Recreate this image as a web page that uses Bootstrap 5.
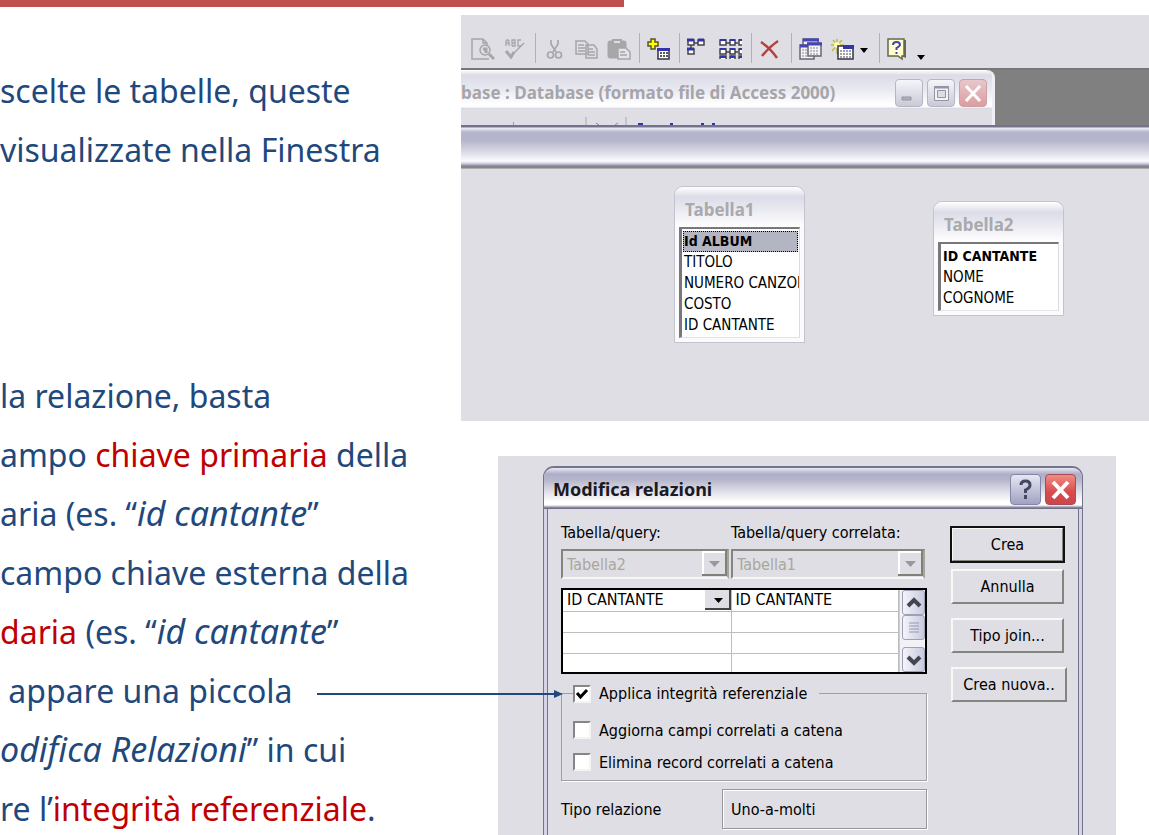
<!DOCTYPE html>
<html lang="it">
<head>
<meta charset="utf-8">
<meta name="viewport" content="width=device-width, initial-scale=1">
<title>Relazioni tra tabelle</title>
<link href="https://cdn.jsdelivr.net/npm/bootstrap@5.3.0/dist/css/bootstrap.min.css" rel="stylesheet">
<style>
:root { --face:#dfdee4; --navy:#1f497d; --brick:#c0504d; }
body { background:#fff; color:#000; font-family:"DejaVu Sans Condensed","DejaVu Sans",sans-serif; font-size:16px; line-height:21px; }
.slide { height:100vh; }
.accent { height:7px; width:54.3%; background:var(--brick); }
.halves { display:grid; grid-template-columns:minmax(0,461fr) minmax(0,688fr); }
.prose { font-family:"Noto Sans","Open Sans",sans-serif; font-size:32px; line-height:59px; color:var(--navy); padding-top:54px; }
.prose p { margin:0 0 187px; }
.prose p + p { margin:0; }
.prose p > span { display:block; white-space:pre; }
.prose em { font-size:34px; line-height:1; }
.prose .key { color:#c00000; }
.arrow-line { left:317px; top:686px; width:247px; height:16px; }
/* main application window */
.app-shot { margin-top:8px; background:var(--face); height:406px; }
.toolbar { height:55px; padding:18px 0 0 6px; border-bottom:2px solid #77777a; }
.toolbar button { width:32px; height:32px; padding:0 4px; border:0; background:none; line-height:0; }
.toolbar .slim { width:16px; padding:0; }
.toolbar .sep { width:8px; height:30px; background:linear-gradient(#b2b2b6,#b2b2b6) center/1px 100% no-repeat; }
.mdi { background:#808080; height:55px; }
.db-win { width:77.6%; background:var(--face); border-right:3px solid #eeeef6; border-radius:0 8px 0 0; }
.db-bar { height:39px; padding:6px 5px 0 0; border-radius:0 8px 0 0; background:linear-gradient(#fff,#dcdce8 5px,#e9e9f1 20px,#fff 34px,#fdfdff 37px,#ccccd8); }
.title-text { font-family:"Noto Sans","Open Sans",sans-serif; font-weight:700; font-size:17px; white-space:nowrap; }
.db-bar .title-text { color:#a5a5aa; }
.cap { width:28px; height:28px; padding:0; border:1px solid #b5b6c4; border-radius:4px; background:linear-gradient(#f5f5fa,#c9cad6); line-height:0; }
.cap.shut { background:linear-gradient(#e7c8cc,#dc9da1); border-color:#cf9fa6; }
.rel-bar { height:44px; background:linear-gradient(#73738c 0,#73738c 2px,#f0f0fa 3px,#b5b5cd 7px,#b4b4ca 15px,#d7d7e3 26px,#fbfbfd 36px,#dcdce9 38px,#a4a4b8 40px,#85858e 41px,#85858e 43px,#d6d6d4 44px); }
.canvas { height:252px; }
.node { width:131px; background:#fbfbfe; border:1px solid #c3c3ce; border-radius:9px 9px 0 0; padding:0 4px 4px; }
.node h2 { height:40px; margin:0 -4px; padding:11px 10px 0; color:#a9a9ae; line-height:24px; border-radius:9px 9px 0 0; background:linear-gradient(#fff,#dcdce8 10px,#ebebf2 24px,#fff); }
.fields { margin:0; padding:2px 1px 1px; list-style:none; background:#fff; border:solid #77777c; border-width:2px 1px 1px 3px; border-right-color:#dcdce0; border-bottom-color:#e2e2e8; overflow:hidden; white-space:nowrap; font-size:15px; }
.fields li { padding-left:1px; height:21px; }
.fields .fw-bold { font-size:14px; }
.fields .sel { background:#b4b5c2; outline:1px dotted #000; outline-offset:-1px; }
/* dialog */
.dlg-shot { margin:35px 33px 0 37px; padding:10px 33px 0 45px; background:var(--face); }
.dlg { border:solid #73738c; border-width:2px 1px 0; border-radius:11px 11px 0 0; padding:0 3px; background:#d4d4e6; }
.dlg-bar { height:41px; margin:0 -3px; padding:1px 6px 0 9px; border-radius:9px 9px 0 0; background:linear-gradient(#e8e8f4,#aeaec8 6px,#b7b7cc 12px,#e1e1ea 24px,#fff 34px,#fff 37px,#70708a 40px); }
.dlg-bar .title-text { font-size:18px; color:#1a1a22; }
.dlg-bar .cap { width:31px; height:31px; border-color:#8485a8; background:linear-gradient(#e6e7f2,#a0a2c1); }
.dlg-bar .cap.shut { border-color:#a94b55; background:linear-gradient(#ef8d82,#d94a4e 60%,#c9474b); }
.dlg-body { background:var(--face); border:solid #73738c; border-width:0 1px; padding:13px 11px 40px 13px; height:340px; gap:24px; }
.form-side { flex:0 1 366px; min-width:0; }
.two { display:grid; grid-template-columns:168fr 194fr; column-gap:2px; padding-right:2px; }
.two label { display:block; margin-bottom:6px; white-space:nowrap; }
.combo { appearance:none; width:100%; height:30px; padding:0 0 0 4px; border:2px solid #85857f; border-right-color:#a5a59f; border-bottom-color:#f6f6f2; border-radius:0; color:#a9a79c; opacity:1; background:var(--face) url("data:image/svg+xml,%3Csvg xmlns='http://www.w3.org/2000/svg' width='25' height='26'%3E%3Cpath fill='%23dfdee4' d='M0 0h25v26H0z'/%3E%3Cpath stroke='%23fff' stroke-width='2' fill='none' d='M1 25V1h24'/%3E%3Cpath stroke='%23808078' stroke-width='2' fill='none' d='M0 24h24V0'/%3E%3Cpath fill='%23999' d='M7 10h11l-5.500 6z'/%3E%3C/svg%3E") right top no-repeat; }
.joins { border:2px solid #000; background:#fff; height:86px; margin-top:9px; overflow:hidden; }
.joins table { width:100%; table-layout:fixed; border-collapse:collapse; }
.joins td { height:21px; padding:0 0 0 4px; line-height:20px; border-bottom:1px solid #bdbdbd; border-right:1px solid #bdbdbd; white-space:nowrap; }
.joins tr:last-child td { border-bottom:0; }
.joins td:first-child { width:168px; }
.joins select { appearance:none; display:block; width:100%; height:20px; border:0; border-radius:0; padding:0; color:#000; line-height:20px; background:#fff url("data:image/svg+xml,%3Csvg xmlns='http://www.w3.org/2000/svg' width='26' height='20'%3E%3Cpath fill='%23dfdee4' d='M0 0h26v20H0z'/%3E%3Cpath stroke='%23444' stroke-width='2' fill='none' d='M0 19h25V0'/%3E%3Cpath d='M9 8h9l-4.500 5z'/%3E%3C/svg%3E") right top no-repeat; }
.scroller { width:26px; flex:none; background:#f1f1f6; padding-left:2px; border-left:1px solid #ccc; }
.scroller button { width:100%; height:25px; padding:0; border:1px solid #9da0b7; border-radius:3px; background:linear-gradient(90deg,#f4f4fb,#c8c9dc); line-height:0; }
.rules { margin-top:9px; padding:0 0 2px 11px; border:1px solid #a0a0a3; box-shadow:1px 1px 0 #fff; }
.rules legend { float:none; width:auto; margin:0 0 10px; padding:0 12px 0 0; font-size:16px; line-height:21px; }
.rules label { display:flex; align-items:center; white-space:nowrap; }
.rules > label { height:32px; }
.rules .form-check-input { flex:none; width:18px; height:18px; margin:0 8px 0 0; border-radius:0; border:2px solid #85858a; border-right-color:#f4f4f0; border-bottom-color:#f4f4f0; background-color:#fff; }
.rules .form-check-input:checked { background-image:url("data:image/svg+xml,%3Csvg xmlns='http://www.w3.org/2000/svg' viewBox='0 0 14 14'%3E%3Cpath d='M2 6l3.500 4L12 3' fill='none' stroke='%23000' stroke-width='3'/%3E%3C/svg%3E"); background-size:14px; }
.kind { flex:0 0 205px; height:40px; border:1px solid #97979b; box-shadow:inset 1px 1px #fff,1px 1px #fff; padding:9px 8px; }
.cmds { flex:0 0 116px; gap:14px; padding-top:5px; }
.push { width:113px; height:35px; padding:0; border:2px solid; border-color:#f8f8f4 #85857f #85857f #f8f8f4; border-radius:0; background:var(--face); font-size:16px; line-height:21px; color:#000; }
.push.main { outline:2px solid #111; outline-offset:-1px; margin-bottom:-7px; }
.push.wide { width:116px; }
</style>
</head>
<body>
<div class="slide position-relative overflow-hidden">
  <div class="accent"></div>
  <main class="halves">
    <section class="prose">
      <p><span>scelte le tabelle, queste</span><span>visualizzate nella Finestra</span></p>
      <p><span>la relazione, basta</span><span>ampo <b class="key fw-normal">chiave primaria</b> della</span><span>aria (es. “<em>id cantante</em>”</span><span>campo chiave esterna della</span><span><b class="key fw-normal">daria</b> (es. “<em>id cantante</em>”</span><span> appare una piccola</span><span><em>odifica Relazioni</em>” in cui</span><span>re l’<b class="key fw-normal">integrità referenziale</b>.</span></p>
    </section>

    <div>
      <section class="app-shot overflow-hidden">
        <div class="toolbar d-flex" role="toolbar" aria-label="Relazioni">
          <button aria-label="Anteprima"><svg width="24" height="24" fill="none" stroke="#a7a7a9" stroke-width="1.500"><path d="M15 22H1V2h11l4 4v3M12 2v4h4M1 22h17"/><circle cx="14" cy="13" r="5"/><path d="M12 12h3v4M18 17l5 5" stroke-width="3"/></svg></button>
          <button aria-label="Controllo ortografia"><svg width="24" height="24" fill="none" stroke="#a7a7a9"><path d="M3 9V4l1-1h1l1 1v5M3 6h3M9 9V3h3v2l-1 1H9h3v3H9M18 3h-3v6h3" stroke-width="1.300"/><path d="M8 19L21 6" stroke-width="1.500"/><path d="M3 14l5 6 3-5" stroke-width="3"/></svg></button>
          <span class="sep"></span>
          <button aria-label="Taglia"><svg width="24" height="24" fill="none" stroke="#a7a7a9" stroke-width="1.700"><path d="M8 3v4l5 8M15 3v4l-5 8"/><circle cx="7.500" cy="18" r="3"/><circle cx="15.500" cy="18" r="3"/></svg></button>
          <button aria-label="Copia"><svg width="24" height="24" fill="#dfdee4" stroke="#a7a7a9" stroke-width="1.500"><path d="M1 4h9l3 3v10H1zM3 8h6M3 11h7M3 14h7M11 8h8l3 4v9H11zM13 12h5M13 15h7M13 18h7"/></svg></button>
          <button aria-label="Incolla"><svg width="24" height="24" stroke="#a7a7a9"><rect x="1" y="4" width="18" height="17" rx="2" fill="#a7a7a9"/><path d="M6 6V3h8v3" fill="#dfdee4" stroke-width="2"/><path d="M11 11h8l4 4v7H11zM13 15h5M13 18h7" fill="#e4e4e8" stroke-width="1.500"/></svg></button>
          <span class="sep"></span>
          <button aria-label="Mostra tabella"><svg width="24" height="24"><path d="M4 2h4v3h3v4H8v3H4V9H1V5h3z" fill="#ff0" stroke="#555528" stroke-width="1.500"/><path d="M11 12h11v10H11z" fill="#fff" stroke="#334" stroke-width="1.500"/><path d="M10 11h13v3H10z" fill="#33a"/><path d="M13 16h8M13 19h8" stroke="#222" stroke-width="1.500" stroke-dasharray="2 1"/></svg></button>
          <span class="sep"></span>
          <button aria-label="Relazioni dirette"><svg width="24" height="24" fill="#fff" stroke="#444" stroke-width="1.500"><path d="M1 3h6v5H1zM11 3h6v5h-6zM1 12h6v5H1zM7 6h4M4 8v4"/><path d="M0 3h7M11 3h6M0 12h7" stroke="#33a" stroke-width="3"/></svg></button>
          <button aria-label="Tutte le relazioni"><svg width="24" height="24" fill="#fff" stroke="#444" stroke-width="1.500"><path d="M1 3h6v5H1zM11 3h5v5h-5zM1 12h6v5H1zM11 12h5v5h-5zM7 6h4M7 15h4M16 6h3M16 15h3M23 3h-3v5h3M23 12h-3v5h3M1 22v-3h6v3M11 22v-3h5v3M20 22v-3h3"/><path d="M1 3h6M11 3h5M20 3h3M1 12h6M11 12h5M20 12h3M1 20h6M11 20h5M20 20h3" stroke="#33a" stroke-width="2"/></svg></button>
          <span class="sep"></span>
          <button aria-label="Elimina"><svg width="24" height="24" fill="none" stroke="#b5403c"><path d="M2 5c6 4 12 10 16 16" stroke-width="2.500"/><path d="M19 4C13 8 7 14 3 19" stroke-width="2.500"/></svg></button>
          <span class="sep"></span>
          <button aria-label="Finestra database"><svg width="24" height="24" fill="#f4f4f4" stroke="#667" stroke-width="1.500"><path d="M4 2h15v8H4z"/><path d="M1 8h14v14H1z"/><path d="M9 6h13v13H9z"/><path d="M4 3h16M1 9h8M8 7h15" stroke="#44b" stroke-width="3"/><path d="M3 13h5M3 16h5M3 19h5M11 11h9M11 14h9M11 17h9" stroke="#888" stroke-width="1" stroke-dasharray="2 1"/></svg></button>
          <button aria-label="Nuovo oggetto"><svg width="24" height="24"><path d="M6 2v15M0 8h13M2 3l9 10M11 3L1 14" stroke="#bcb84e" stroke-width="1.500"/><circle cx="6" cy="8" r="3" fill="#fafaae"/><path d="M7 9h15v13H7z" fill="#fff" stroke="#334" stroke-width="1.500"/><path d="M12 8h11v4H12z" fill="#33a"/><path d="M9 14h12M9 17h12M9 20h12" stroke="#445" stroke-dasharray="2 1"/></svg></button>
          <button class="slim" aria-label="Altri oggetti"><svg width="16" height="24"><path d="M1 11h8l-4 5z"/></svg></button>
          <span class="sep"></span>
          <button aria-label="Guida"><svg width="24" height="24"><path d="M4 3h15v18l-5-2H4z" fill="#666"/><path d="M1 2h16v17h-2v3l-4-3H1z" fill="#ffffd0" stroke="#66664c" stroke-width="1.500"/><path d="M6 8q0-3 3.500-3t3.500 3q0 1-3.500 3v2M9.500 15v2" fill="none" stroke="#44a" stroke-width="2"/></svg></button>
          <button class="slim" aria-label="Opzioni barra"><svg width="16" height="24"><path d="M2 18h8l-4 5z"/></svg></button>
        </div>
        <div class="mdi">
          <div class="db-win">
            <div class="db-bar d-flex align-items-center gap-1">
              <span class="title-text me-auto">base : Database (formato file di Access 2000)</span>
              <button class="cap" aria-label="Riduci"><svg width="26" height="26"><path d="M6 17h9v3H6z" fill="#b0b1bd" stroke="#9394a4"/></svg></button>
              <button class="cap" aria-label="Ingrandisci"><svg width="26" height="26"><path d="M6.500 6.500h14v14h-14z" fill="#f2f2f6" stroke="#9394a4"/><path d="M6 7.500h15" stroke="#9394a4" stroke-width="2"/><path d="M9.500 10.500h8v7h-8z" fill="#dcdce4" stroke="#9394a4"/></svg></button>
              <button class="cap shut" aria-label="Chiudi"><svg width="26" height="26"><path d="M6 6l14 15M20 6L6 21" stroke="#fff" stroke-width="3"/></svg></button>
            </div>
            <svg class="d-block" width="260" height="16"><path d="M125 8v8M165 8v8" stroke="#aaa"/><path d="M52 13h1v3h-1z" fill="#aa3"/><path d="M135 14l3 2M154 16l3-2" stroke="#888"/><path d="M177 14h5v2h-5zM209 14h3v2h-3zM240 14h3v2h-3zM251 14h3v2h-3z" fill="#33a"/></svg>
          </div>
        </div>
        <div class="rel-bar"></div>
        <div class="canvas position-relative">
          <article class="node position-absolute" style="left:213px;top:17px">
            <h2 class="title-text">Tabella1</h2>
            <ul class="fields"><li class="sel fw-bold">Id ALBUM</li><li>TITOLO</li><li>NUMERO CANZONI</li><li>COSTO</li><li>ID CANTANTE</li></ul>
          </article>
          <article class="node position-absolute" style="left:472px;top:32px">
            <h2 class="title-text">Tabella2</h2>
            <ul class="fields"><li class="fw-bold">ID CANTANTE</li><li>NOME</li><li>COGNOME</li></ul>
          </article>
        </div>
      </section>

      <section class="dlg-shot">
        <div class="dlg">
          <div class="dlg-bar d-flex align-items-center gap-1">
            <span class="title-text me-auto">Modifica relazioni</span>
            <button class="cap" aria-label="Guida"><svg width="29" height="29"><path d="M10 10q0-4 4.500-4t4.500 4q0 3-4.500 5v3M14.500 20v4" fill="none" stroke="#444960" stroke-width="3"/></svg></button>
            <button class="cap shut" aria-label="Chiudi"><svg width="29" height="29"><path d="M7 7l15 16M22 7L7 23" stroke="#fff" stroke-width="4"/></svg></button>
          </div>
          <form class="dlg-body d-flex">
            <div class="form-side">
              <div class="two">
                <div><label for="q1">Tabella/query:</label><select class="combo" id="q1" disabled><option>Tabella2</option></select></div>
                <div><label for="q2">Tabella/query correlata:</label><select class="combo" id="q2" disabled><option>Tabella1</option></select></div>
              </div>
              <div class="joins d-flex">
                <table>
                  <tr><td><select aria-label="Campo"><option>ID CANTANTE</option></select></td><td>ID CANTANTE</td></tr>
                  <tr><td></td><td></td></tr>
                  <tr><td></td><td></td></tr>
                  <tr><td></td><td></td></tr>
                </table>
                <div class="scroller d-flex flex-column">
                  <button type="button" aria-label="Su"><svg width="20" height="22"><path d="M4 14l6-6 6 6" fill="none" stroke="#445" stroke-width="4"/></svg></button>
                  <button type="button" aria-label="Scorri"><svg width="20" height="22"><path d="M5 6h10M5 9h10M5 12h10M5 15h10" stroke="#9598b5"/></svg></button>
                  <button type="button" class="mt-auto" aria-label="Giù"><svg width="20" height="22"><path d="M4 8l6 6 6-6" fill="none" stroke="#445" stroke-width="4"/></svg></button>
                </div>
              </div>
              <fieldset class="rules">
                <legend><label><input class="form-check-input" type="checkbox" checked>Applica integrità referenziale</label></legend>
                <label><input class="form-check-input" type="checkbox">Aggiorna campi correlati a catena</label>
                <label><input class="form-check-input" type="checkbox">Elimina record correlati a catena</label>
              </fieldset>
              <div class="d-flex align-items-center justify-content-between mt-2"><span>Tipo relazione</span><output class="kind">Uno-a-molti</output></div>
            </div>
            <div class="cmds d-flex flex-column">
              <button type="button" class="push main">Crea</button>
              <button type="button" class="push">Annulla</button>
              <button type="button" class="push">Tipo join...</button>
              <button type="button" class="push wide">Crea nuova..</button>
            </div>
          </form>
        </div>
      </section>
    </div>
  </main>
  <svg class="arrow-line position-absolute" aria-hidden="true"><path d="M0 8h238" stroke="#1f497d" stroke-width="2"/><path d="M237 4l9 4-9 4z" fill="#1f497d"/></svg>
</div>
<script src="https://cdn.jsdelivr.net/npm/bootstrap@5.3.0/dist/js/bootstrap.bundle.min.js"></script>
</body>
</html>
